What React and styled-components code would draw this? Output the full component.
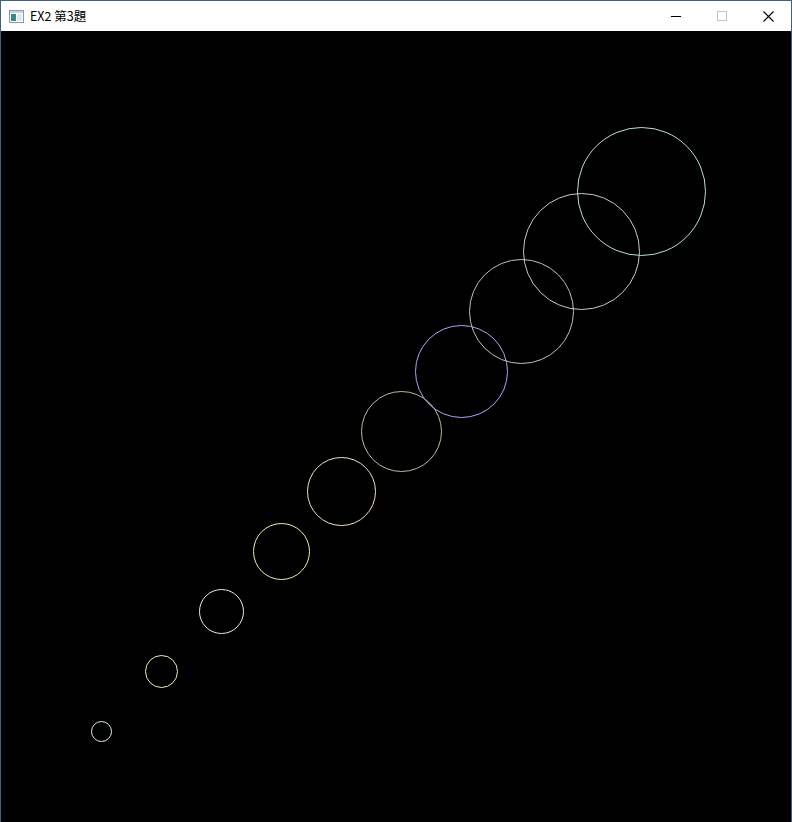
import styled, { createGlobalStyle } from "styled-components";

const GlobalStyle = createGlobalStyle`
  html, body {
    margin: 0;
    padding: 0;
    background: #000;
  }
  body {
    font-family: "Noto Sans CJK TC", "Noto Sans", sans-serif;
  }
`;

const circles = [
  { r: 10, color: "#d8f4ec" },
  { r: 16, color: "#e0f8b8" },
  { r: 22, color: "#e8e8f8" },
  { r: 28, color: "#d8f4ac" },
  { r: 34, color: "#f4e0cc" },
  { r: 40, color: "#a8c49c" },
  { r: 46, color: "#c09cf4" },
  { r: 52, color: "#bcc4bc" },
  { r: 58, color: "#c4ccc8" },
  { r: 64, color: "#b8e0c8" },
];

export default function App() {
  return (
    <>
      <GlobalStyle />
      <Window>
        <TitleBar>
          <AppIcon>
            <svg width="15" height="13" viewBox="0 0 15 13">
              <rect x="0.5" y="0.5" width="14" height="12" fill="#fff" stroke="#8a9aa8" />
              <rect x="1" y="1" width="13" height="2" fill="#c8d4de" />
              <rect x="2" y="4" width="5" height="7" fill="#3f8a7e" />
              <rect x="8" y="4" width="5" height="7" fill="#dfe8ee" />
            </svg>
          </AppIcon>
          <Title>EX2 第3題</Title>
          <Controls>
            <ControlButton>
              <svg width="10" height="10" viewBox="0 0 10 10">
                <line x1="0" y1="5.5" x2="10" y2="5.5" stroke="#000" />
              </svg>
            </ControlButton>
            <ControlButton>
              <svg width="10" height="10" viewBox="0 0 10 10">
                <rect x="0.5" y="0.5" width="9" height="9" fill="none" stroke="#c4c4c4" />
              </svg>
            </ControlButton>
            <ControlButton>
              <svg width="11" height="11" viewBox="0 0 11 11">
                <path d="M0.5 0.5 L10.5 10.5 M10.5 0.5 L0.5 10.5" stroke="#000" strokeWidth="1.1" />
              </svg>
            </ControlButton>
          </Controls>
        </TitleBar>
        <Canvas>
          <svg width="790" height="791">
            {circles.map((c, i) => (
              <circle
                key={i}
                cx={100.5 + 60 * i}
                cy={700.5 - 60 * i}
                r={c.r}
                fill="none"
                stroke={c.color}
                strokeWidth="1"
              />
            ))}
          </svg>
        </Canvas>
      </Window>
    </>
  );
}

const Window = styled.div`
  width: 792px;
  height: 822px;
  box-sizing: border-box;
  border-left: 1px solid #3f6283;
  border-right: 1px solid #3f6283;
  border-top: 1px solid #3f6283;
  display: flex;
  flex-direction: column;
  background: #000;
`;

const TitleBar = styled.div`
  height: 30px;
  flex: none;
  background: #fff;
  display: flex;
  align-items: center;
  padding-left: 8px;
`;

const AppIcon = styled.div`
  width: 15px;
  height: 13px;
  display: flex;
  margin-right: 6px;
  margin-top: 1px;
`;

const Title = styled.div`
  font-size: 12.5px;
  color: #000;
  flex: 1;
  line-height: 1;
`;

const Controls = styled.div`
  display: flex;
  height: 100%;
`;

const ControlButton = styled.div`
  width: 46px;
  height: 100%;
  display: flex;
  align-items: center;
  justify-content: center;
`;

const Canvas = styled.div`
  flex: 1;
  background: #000;
  overflow: hidden;
  > svg {
    display: block;
  }
`;
